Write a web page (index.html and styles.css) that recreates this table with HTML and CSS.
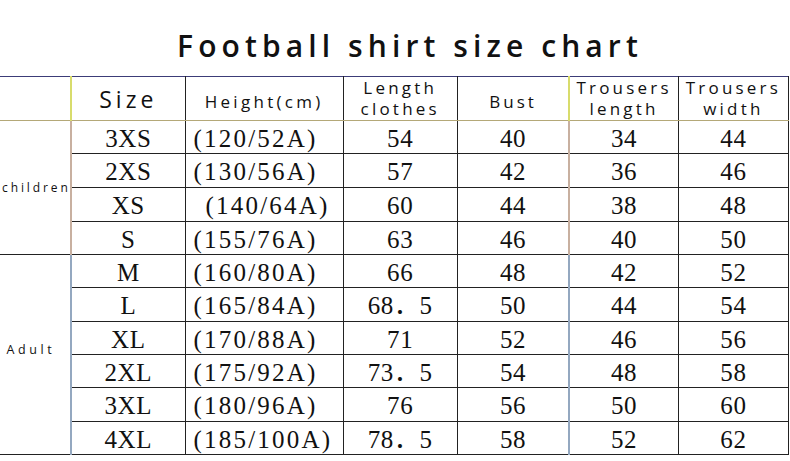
FILE: index.html
```html
<!DOCTYPE html>
<html>
<head>
<meta charset="utf-8">
<link rel="stylesheet" href="styles.css">
</head>
<body>
<div class="chart">
  <h1 class="title">Football shirt size chart</h1>
  <table class="sizes">
    <colgroup>
      <col class="c0"><col class="c1"><col class="c2"><col class="c3"><col class="c4"><col class="c5"><col class="c6">
    </colgroup>
    <thead>
      <tr>
        <th class="blank"></th>
        <th class="h-size yl">Size</th>
        <th class="h-sm h-height">Height(cm)</th>
        <th class="h-two">Length<br>clothes</th>
        <th class="h-sm ol">Bust</th>
        <th class="h-two yl">Trousers<br>length</th>
        <th class="h-two">Trousers<br>width</th>
      </tr>
    </thead>
    <tbody>
      <tr class="r33"><td class="grp kids" rowspan="4">children</td><td class="ch">3XS</td><td class="ht">(120/52A)</td><td>54</td><td>40</td><td class="ch">34</td><td>44</td></tr>
      <tr class="r34"><td class="ch">2XS</td><td class="ht">(130/56A)</td><td>57</td><td>42</td><td class="ch">36</td><td>46</td></tr>
      <tr class="r34"><td class="ch">XS</td><td class="ht shift">(140/64A)</td><td>60</td><td>44</td><td class="ch">38</td><td>48</td></tr>
      <tr class="r33"><td class="ch">S</td><td class="ht">(155/76A)</td><td>63</td><td>46</td><td class="ch">40</td><td>50</td></tr>
      <tr class="r33"><td class="grp adult" rowspan="6">Adult</td><td class="ad">M</td><td class="ht">(160/80A)</td><td>66</td><td>48</td><td class="ad">42</td><td>52</td></tr>
      <tr class="r34"><td class="ad">L</td><td class="ht">(165/84A)</td><td>68．5</td><td>50</td><td class="ad">44</td><td>54</td></tr>
      <tr class="r33"><td class="ad">XL</td><td class="ht">(170/88A)</td><td>71</td><td>52</td><td class="ad">46</td><td>56</td></tr>
      <tr class="r33"><td class="ad">2XL</td><td class="ht">(175/92A)</td><td>73．5</td><td>54</td><td class="ad">48</td><td>58</td></tr>
      <tr class="r34"><td class="ad">3XL</td><td class="ht">(180/96A)</td><td>76</td><td>56</td><td class="ad">50</td><td>60</td></tr>
      <tr class="r33"><td class="ad">4XL</td><td class="ht">(185/100A)</td><td>78．5</td><td>58</td><td class="ad">52</td><td>62</td></tr>
    </tbody>
  </table>
</div>
</body>
</html>
```

FILE: styles.css
```css
html, body {
  margin: 0;
  padding: 0;
  background: #ffffff;
}

.chart {
  width: 790px;
  height: 461px;
  overflow: hidden;
}

.title {
  margin: 0;
  height: 76px;
  box-sizing: border-box;
  padding: 26px 0 0 30px;
  text-align: center;
  font-family: "Open Sans", "Noto Sans", sans-serif;
  font-weight: 600;
  font-size: 30px;
  line-height: 40px;
  letter-spacing: 5.1px;
  color: #111;
}

.sizes {
  border-collapse: collapse;
  table-layout: fixed;
  width: 789px;
  color: #111;
}

.c0 { width: 71px; }
.c1 { width: 114px; }
.c2 { width: 158px; }
.c3 { width: 114px; }
.c4 { width: 112px; }
.c5 { width: 109px; }
.c6 { width: 110px; }

.sizes th,
.sizes td {
  padding: 0;
  text-align: center;
  border: 1px solid #222;
  overflow: hidden;
  white-space: nowrap;
}

.sizes thead tr {
  height: 43px;
}

.sizes thead th {
  border-top: 1px solid #3c3c78;
  border-bottom: 1px solid #b4a878;
  font-family: "Open Sans", "Noto Sans", sans-serif;
  font-weight: 500;
  color: #111;
  vertical-align: middle;
}

.sizes th.blank {
  border-left: none;
  border-right: 2px solid #d8dc6c;
}

.sizes th.yl {
  border-right-color: #222;
}

.sizes th.ol {
  border-right: 2px solid #d8dc6c;
}

.h-size {
  font-size: 23px;
  letter-spacing: 4px;
  padding-top: 1px !important;
}

.h-sm {
  font-size: 17px;
  letter-spacing: 3px;
  padding-top: 6px !important;
}

.h-height {
  font-size: 17px;
  letter-spacing: 3.3px;
}

.h-two {
  font-size: 17px;
  line-height: 21px;
  letter-spacing: 3.2px;
  padding-bottom: 1px !important;
}

.sizes tbody td {
  font-family: "Liberation Serif", "Noto Sans CJK SC", serif;
  font-size: 25px;
  line-height: 28px;
  letter-spacing: 0.6px;
  padding-top: 3px;
  vertical-align: middle;
}

.sizes tbody td.ht {
  text-align: left;
  padding-left: 8px;
  letter-spacing: 2.2px;
}

.sizes tbody td.ht.shift {
  padding-left: 20px;
}

.sizes tr.r33 { height: 33px; }
.sizes tr.r34 { height: 34px; }

.sizes td.grp {
  border-left: none;
  font-family: "Open Sans", "Noto Sans", sans-serif;
  font-size: 12px;
  line-height: 14px;
  padding-top: 0;
  text-align: center;
}

.sizes td.kids {
  letter-spacing: 2.9px;
  padding-left: 2px;
}

.sizes td.adult {
  font-size: 12.5px;
  letter-spacing: 3.6px;
  padding-bottom: 10px;
  padding-right: 8px;
}

.sizes td.ch {
  border-left: 2px solid #c8b0a0;
}

.sizes td.ad {
  border-left: 2px solid #94a8c0;
}
```
